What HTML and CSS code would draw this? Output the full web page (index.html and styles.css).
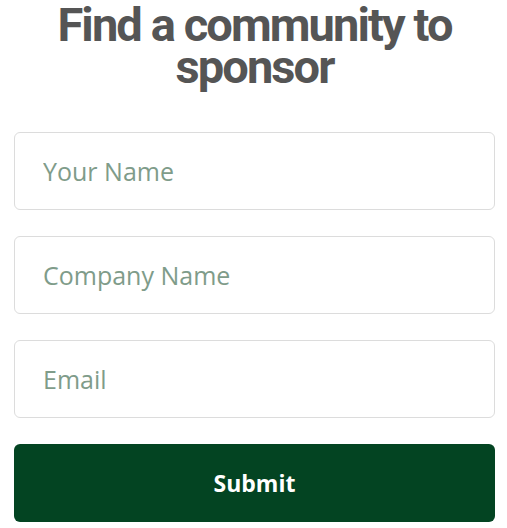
FILE: index.html
```html
<!DOCTYPE html>
<html>
<head>
<meta charset="utf-8">
<link rel="stylesheet" href="styles.css">
</head>
<body>
<div class="page">
  <h1 class="title">Find a community to sponsor</h1>
  <form class="form">
    <input class="field" type="text" placeholder="Your Name">
    <input class="field" type="text" placeholder="Company Name">
    <input class="field" type="email" placeholder="Email">
    <button class="submit" type="button">Submit</button>
  </form>
</div>
</body>
</html>
```
FILE: styles.css
```css
html, body {
  margin: 0;
  padding: 0;
  background: #ffffff;
}
.page {
  padding: 0 12px 0 14px;
  width: 481px;
}
.title {
  margin: 0;
  font-family: Roboto, "Liberation Sans", sans-serif;
  font-weight: 700;
  font-size: 47px;
  line-height: 42px;
  letter-spacing: -1.9px;
  color: #555555;
  text-align: center;
  padding: 4px 0 0;
}
.form {
  display: flex;
  flex-direction: column;
  gap: 26px;
  margin-top: 44px;
}
.field {
  box-sizing: border-box;
  height: 78px;
  width: 100%;
  border: 1px solid #dcdcdc;
  border-radius: 6px;
  padding: 0 28px;
  font-family: "Open Sans", sans-serif;
  font-size: 25px;
  color: #333;
  outline: none;
  background: #fff;
}
.field::placeholder {
  color: #7f9c8a;
  opacity: 1;
}
.submit {
  box-sizing: border-box;
  height: 78px;
  width: 100%;
  border: none;
  border-radius: 6px;
  background: #034422;
  color: #ffffff;
  font-family: "Open Sans", sans-serif;
  font-weight: 700;
  font-size: 23px;
  cursor: pointer;
}
```
